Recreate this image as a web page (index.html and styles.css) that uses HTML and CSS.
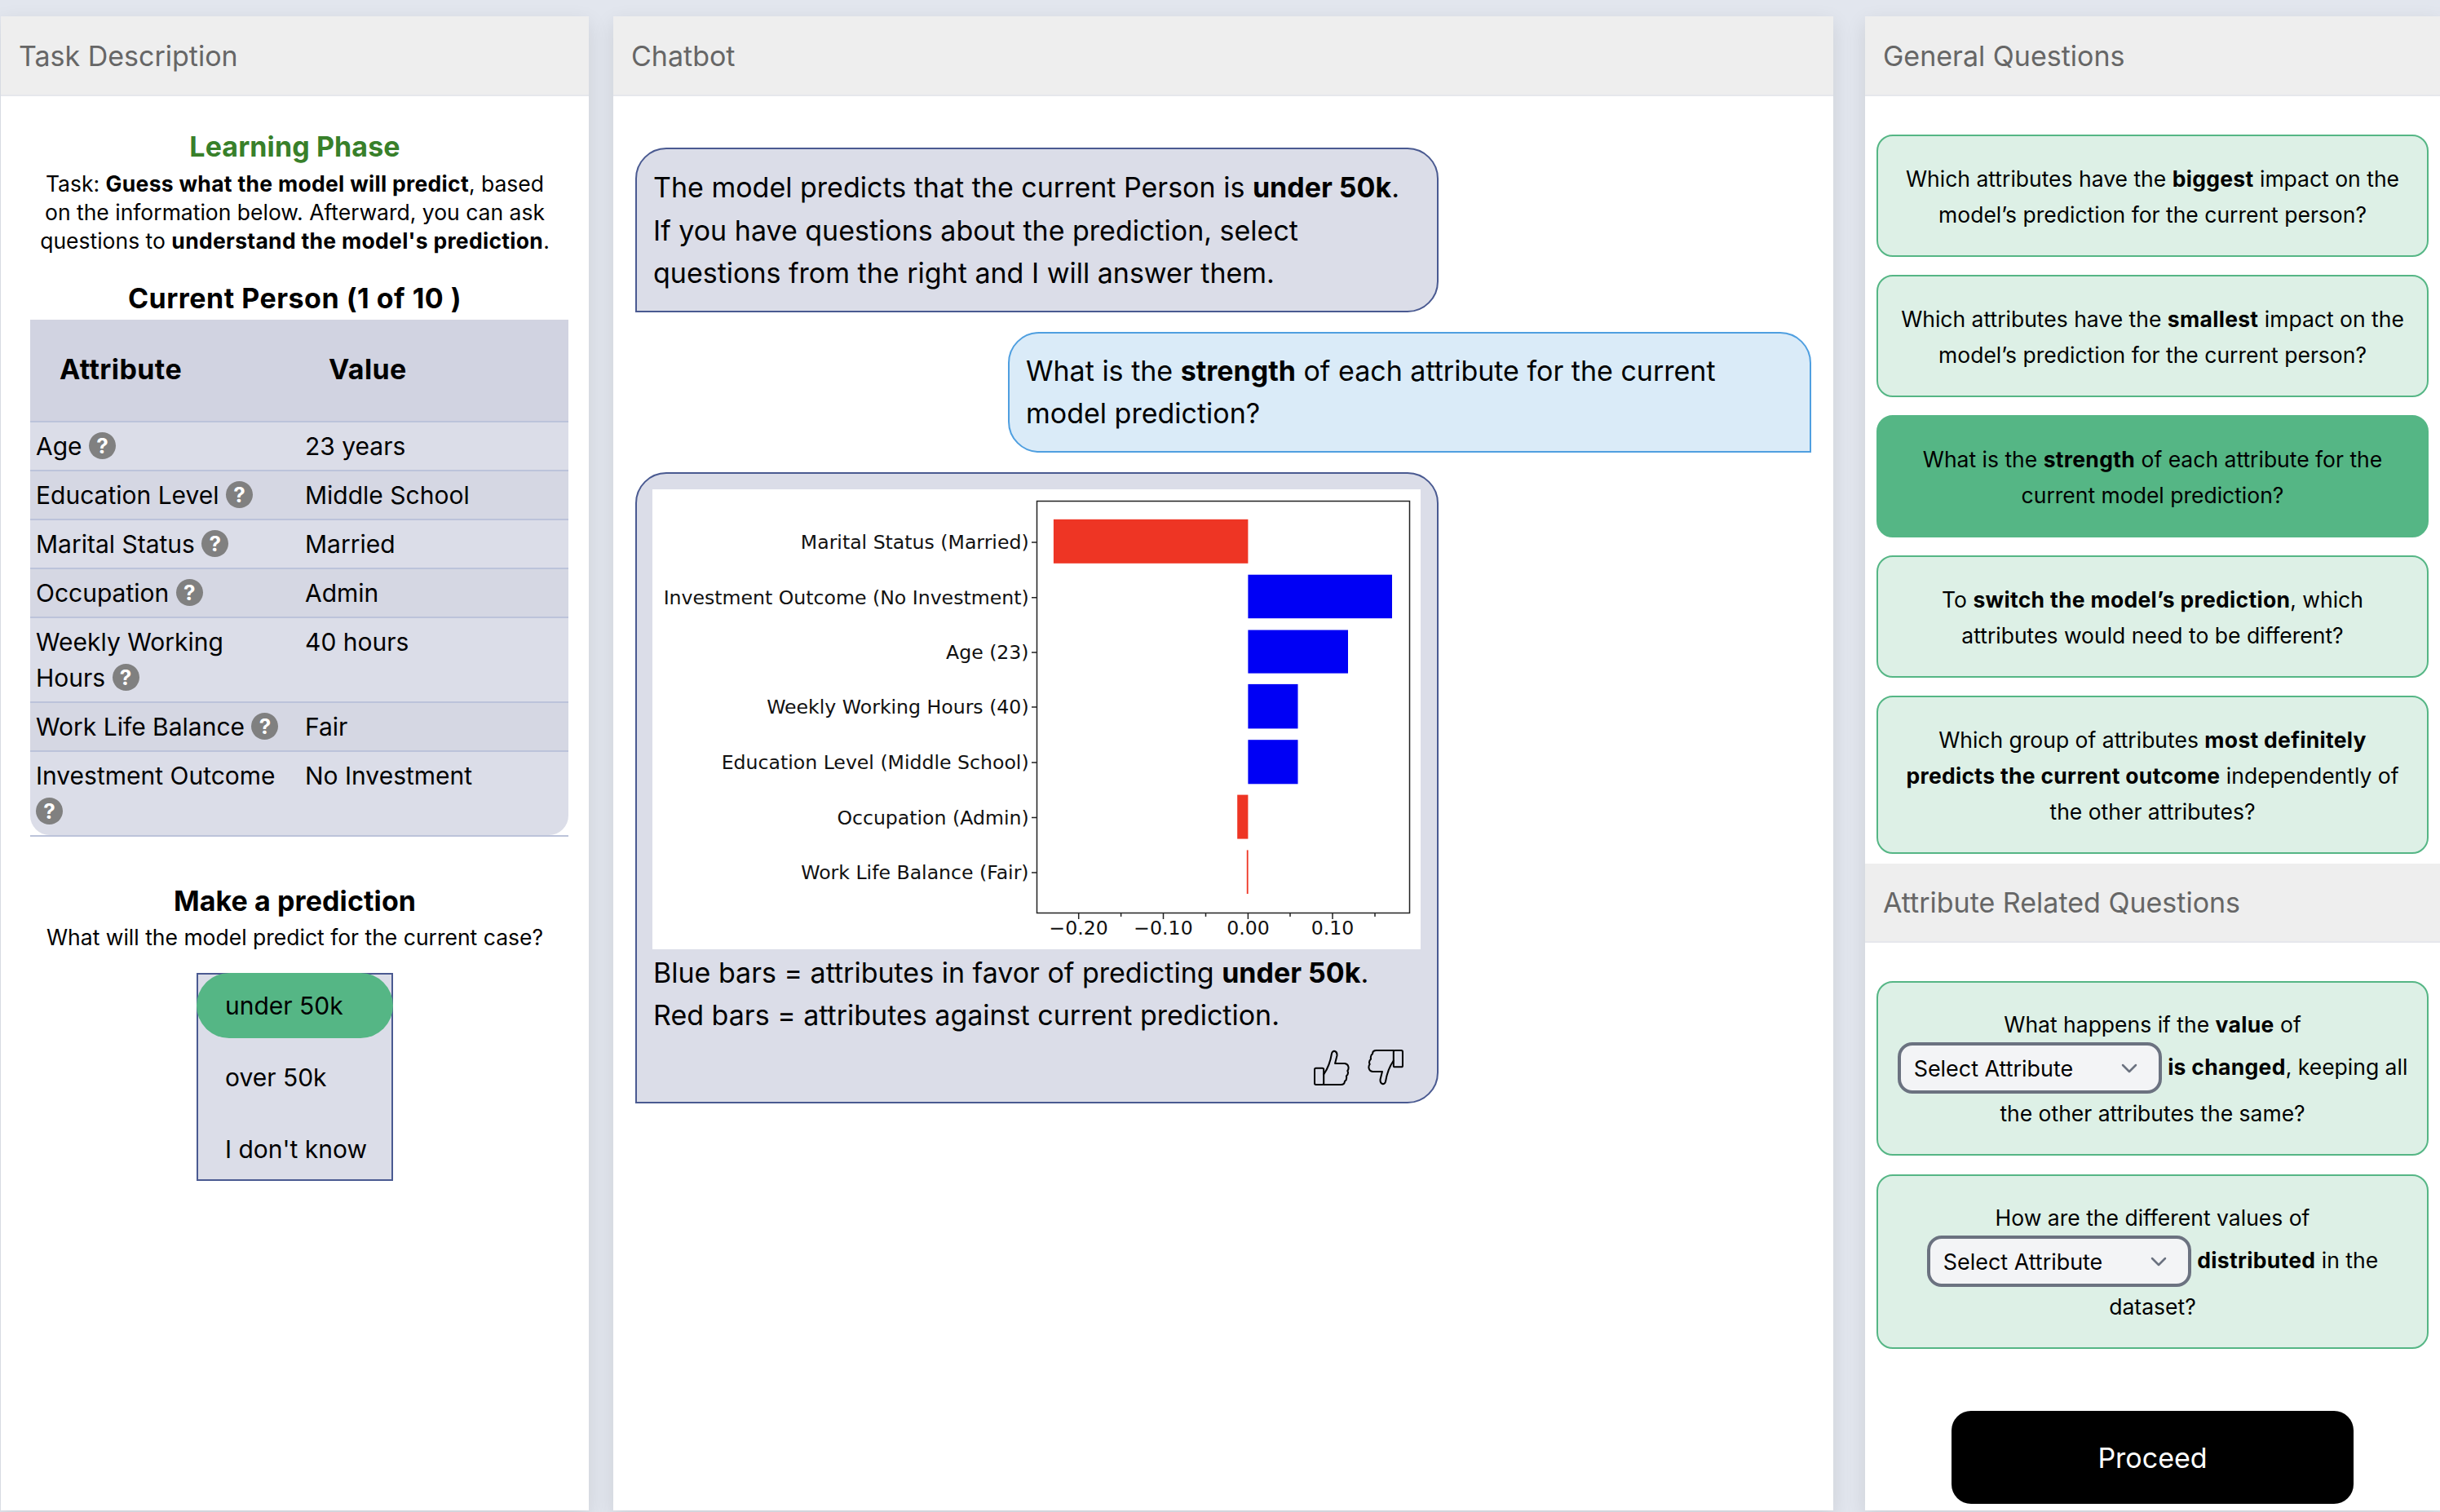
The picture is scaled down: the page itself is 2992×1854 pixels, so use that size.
FILE: index.html
```html
<!DOCTYPE html>
<html lang="en">
<head>
<meta charset="utf-8">
<title>Learning Phase</title>
<link rel="stylesheet" href="styles.css">
</head>
<body>
<main class="app">
  <section class="panel panel-task">
    <header class="panel-head">Task Description</header>
    <div class="task-body">
      <h2 class="phase">Learning Phase</h2>
      <p class="task-text">Task: <b>Guess what the model will predict</b>, based<br>on the information below. Afterward, you can ask<br>questions to <b>understand the model's prediction</b>.</p>
      <h3 class="person">Current Person (1 of 10 )</h3>
      <div class="table-wrap">
        <table class="attrs">
          <thead><tr><th class="th-attr">Attribute</th><th class="th-val">Value</th></tr></thead>
          <tbody>
            <tr><td>Age <span class="help">?</span></td><td>23 years</td></tr>
            <tr><td>Education Level <span class="help">?</span></td><td>Middle School</td></tr>
            <tr><td>Marital Status <span class="help">?</span></td><td>Married</td></tr>
            <tr><td>Occupation <span class="help">?</span></td><td>Admin</td></tr>
            <tr><td>Weekly Working<br>Hours <span class="help">?</span></td><td>40 hours</td></tr>
            <tr><td>Work Life Balance <span class="help">?</span></td><td>Fair</td></tr>
            <tr><td>Investment Outcome<br><span class="help">?</span></td><td>No Investment</td></tr>
          </tbody>
        </table>
      </div>
      <h3 class="predict-title">Make a prediction</h3>
      <p class="predict-sub">What will the model predict for the current case?</p>
      <div class="options">
        <div class="option option-on">under 50k</div>
        <div class="option">over 50k</div>
        <div class="option">I don't know</div>
      </div>
    </div>
  </section>

  <section class="panel panel-chat">
    <header class="panel-head">Chatbot</header>
    <div class="chat-body">
      <div class="bubble bot">The model predicts that the current Person is <b>under 50k</b>.<br>If you have questions about the prediction, select<br>questions from the right and I will answer them.</div>
      <div class="bubble user">What is the <b>strength</b> of each attribute for the current<br>model prediction?</div>
      <div class="bubble bot bot-chart">
        <svg class="chart" width="942" height="564" viewBox="0 0 942 564">
          <rect width="942" height="564" fill="#fff"/>
          <g fill="#ee3524">
            <rect x="491.9" y="36.8" width="238.5" height="54"/>
            <rect x="717.2" y="374.6" width="13.2" height="54"/>
            <rect x="728.8" y="442.4" width="1.8" height="53.6"/>
          </g>
          <g fill="#0000f5">
            <rect x="730.4" y="104.7" width="176.6" height="53.5"/>
            <rect x="730.4" y="172.5" width="122.6" height="53.1"/>
            <rect x="730.4" y="238.9" width="61.1" height="54.5"/>
            <rect x="730.4" y="307.2" width="61.1" height="54.1"/>
          </g>
          <rect x="471.5" y="14.5" width="457" height="505" fill="none" stroke="#222" stroke-width="1.5"/>
          <g stroke="#222" stroke-width="1.5">
            <path d="M465 65H471M465 132.700H471M465 200H471M465 267H471M465 335H471M465 402.600H471M465 470H471"/>
            <path d="M522.700 520V527M626.500 520V527M730.400 520V527M834 520V527"/>
            <path d="M574.600 520V524M678.500 520V524M782 520V524M886 520V524"/>
          </g>
          <g class="chart-labels" text-anchor="end">
            <text x="461.600" y="73">Marital Status (Married)</text>
            <text x="461.600" y="140.700">Investment Outcome (No Investment)</text>
            <text x="461.600" y="208">Age (23)</text>
            <text x="461.600" y="275">Weekly Working Hours (40)</text>
            <text x="461.600" y="343">Education Level (Middle School)</text>
            <text x="461.600" y="410.600">Occupation (Admin)</text>
            <text x="461.600" y="478">Work Life Balance (Fair)</text>
          </g>
          <g class="chart-labels" text-anchor="middle">
            <text x="522.700" y="546">−0.20</text>
            <text x="626.500" y="546">−0.10</text>
            <text x="730.400" y="546">0.00</text>
            <text x="834" y="546">0.10</text>
          </g>
        </svg>
        <p class="chart-note">Blue bars = attributes in favor of predicting <b>under 50k</b>.<br>Red bars = attributes against current prediction.</p>
        <div class="thumbs">
          <svg class="thumb" width="44" height="44" viewBox="0 0 130 130" fill="none" stroke="#000" stroke-width="6" stroke-linejoin="round" stroke-linecap="round"><rect x="3" y="67" width="33" height="60" rx="5"/><path d="M36 90C50 70 60 45 65 14C68 0 86 4 84 22L77 50H112C128 52 128 70 122 77C127 85 122 92 118 96C120 105 117 112 112 115C112 124 105 127 98 127H36"/></svg>
          <svg class="thumb" width="44" height="44" viewBox="0 0 130 130" fill="none" stroke="#000" stroke-width="6" stroke-linejoin="round" stroke-linecap="round"><g transform="rotate(180 65 65)"><rect x="3" y="67" width="33" height="60" rx="5"/><path d="M36 90C50 70 60 45 65 14C68 0 86 4 84 22L77 50H112C128 52 128 70 122 77C127 85 122 92 118 96C120 105 117 112 112 115C112 124 105 127 98 127H36"/></g></svg>
        </div>
      </div>
    </div>
  </section>

  <section class="panel panel-questions">
    <header class="panel-head">General Questions</header>
    <div class="q-list q-general">
      <div class="q">Which attributes have the <b>biggest</b> impact on the<br>model’s prediction for the current person?</div>
      <div class="q">Which attributes have the <b>smallest</b> impact on the<br>model’s prediction for the current person?</div>
      <div class="q q-on">What is the <b>strength</b> of each attribute for the<br>current model prediction?</div>
      <div class="q">To <b>switch the model’s prediction</b>, which<br>attributes would need to be different?</div>
      <div class="q">Which group of attributes <b>most definitely</b><br><b>predicts the current outcome</b> independently of<br>the other attributes?</div>
    </div>
    <header class="panel-head panel-head-sub">Attribute Related Questions</header>
    <div class="q-list q-attr">
      <div class="q q-select">What happens if the <b>value</b> of<br><span class="select-wrap"><select class="attr-select"><option>Select Attribute</option></select><svg class="chev" width="20" height="12" viewBox="0 0 20 12" fill="none" stroke="#6b7280" stroke-width="2.500" stroke-linecap="round" stroke-linejoin="round"><path d="M2 2l8 8 8-8"/></svg></span> <b>is changed</b>, keeping all<br>the other attributes the same?</div>
      <div class="q q-select">How are the different values of<br><span class="select-wrap"><select class="attr-select"><option>Select Attribute</option></select><svg class="chev" width="20" height="12" viewBox="0 0 20 12" fill="none" stroke="#6b7280" stroke-width="2.500" stroke-linecap="round" stroke-linejoin="round"><path d="M2 2l8 8 8-8"/></svg></span> <b>distributed</b> in the<br>dataset?</div>
    </div>
    <div class="proceed-row"><button class="proceed" type="button">Proceed</button></div>
  </section>
</main>
</body>
</html>
```

FILE: styles.css
```css
* { box-sizing: border-box; }
html, body { margin: 0; height: 1854px; overflow: hidden; }
body {
  background: #e2e6ee;
  color: #000;
  font-family: "Inter", "Liberation Sans", sans-serif;
}
p, h2, h3 { margin: 0; }

.app {
  display: grid;
  grid-template-columns: 721px 1496px 705px;
  padding: 20px 0 2px 1px;
  height: 1854px;
}
.panel {
  background: #fff;
  box-shadow: 0 8px 24px rgba(0, 0, 0, 0.1);
  height: 1832px;
}
.panel-chat { margin-left: 30px; width: 1496px; }
.panel-questions { margin-left: 69px; width: 705px; }

.panel-head {
  height: 98px;
  padding: 0 22px;
  display: flex;
  align-items: center;
  background: #eeeeee;
  border-bottom: 2px solid #e6e7ec;
  color: #666;
  font-size: 34px;
}
.panel-head-sub { height: 97px; }

/* Task panel */
.task-body { padding: 38px 0 0; text-align: center; }
.phase { font-size: 34px; line-height: 48px; font-weight: 700; color: #38802a; letter-spacing: 0.1px; }
.task-text { font-size: 26.500px; line-height: 35px; margin-top: 4px; }
.task-text b { letter-spacing: 0.3px; }
.person { font-size: 34px; line-height: 52px; font-weight: 700; margin-top: 27px; letter-spacing: 0.5px; }
.table-wrap { width: 660px; margin-left: 36px; border-bottom: 2px solid #bcc3da; }
.attrs { width: 660px; border-collapse: separate; border-spacing: 0; table-layout: fixed; text-align: left; font-size: 30px; line-height: 44px; }
.attrs th { height: 126px; background: #d1d3e1; border-bottom: 2px solid #bcc3da; font-size: 34px; font-weight: 700; padding: 0 0 2px; letter-spacing: 0.4px; vertical-align: middle; }
.th-attr { width: 330px; padding-left: 36px !important; }
.th-val { padding-left: 36px !important; }
.attrs td { padding: 7px 7px; vertical-align: top; background: #dbdde8; border-bottom: 2px solid #bcc3da; }
.attrs tr:nth-child(even) td { background: #d5d7e3; }
.attrs tr:last-child td { border-bottom: 0; padding-bottom: 7px; }
.attrs tr:last-child td:first-child { border-radius: 0 0 0 24px; }
.attrs tr:last-child td:last-child { border-radius: 0 0 24px 0; }
.help {
  display: inline-block;
  width: 33px;
  height: 33px;
  border-radius: 50%;
  background: #808080;
  color: #fff;
  font-size: 26px;
  font-weight: 700;
  line-height: 33px;
  text-align: center;
  vertical-align: 2px;
}
.predict-title { font-size: 34px; line-height: 44px; font-weight: 700; margin-top: 57px; letter-spacing: 0.1px; }
.predict-sub { font-size: 26.500px; line-height: 36px; margin-top: 4px; }
.options {
  width: 241px;
  height: 255px;
  margin: 26px auto 0;
  background: #dbdde8;
  border: 2px solid #4a5a91;
  display: flex;
  flex-direction: column;
  gap: 8px;
  text-align: left;
  font-size: 30px;
}
.option { flex: none; height: 80px; margin: 0 -2px; padding: 0 0 0 35px; display: flex; align-items: center; border-radius: 40px; }
.option:first-child { margin-top: -2px; }
.option-on { background: #55b685; }

/* Chat */
.chat-body { padding: 63px 27px 0; display: flex; flex-direction: column; gap: 24px; align-items: flex-start; }
.bubble {
  width: 985px;
  padding: 21px 20px 19px;
  font-size: 34px;
  line-height: 52.500px;
  border-style: solid;
  border-width: 2px;
}
.bot { background: #dbdde8; border-color: #4a5a91; border-radius: 38px 38px 38px 0; }
.user { background: #daebf8; border-color: #4f9fe0; border-radius: 38px 38px 0 38px; align-self: flex-end; padding: 20px 20px 19px; }
.bot-chart { padding: 19px 19px 14px; height: 774px; }
.chart { display: block; }
.chart-labels { font-family: "DejaVu Sans", sans-serif; font-size: 23.600px; fill: #111; }
.chart-note { margin-top: 3px; padding-left: 1px; line-height: 52px; }
.thumbs { display: flex; justify-content: flex-end; gap: 22px; margin-top: 16px; padding-right: 22px; }
.thumb { display: block; }

/* Questions */
.q-list { display: flex; flex-direction: column; padding: 0 14px; }
.q-general { padding-top: 47px; gap: 22px; padding-bottom: 12px; }
.q-attr { padding-top: 47px; gap: 23px; }
.q {
  padding: 30px 10px 28px;
  min-height: 150px;
  background: #ddf0e6;
  border: 2px solid #55b685;
  border-radius: 20px;
  text-align: center;
  font-size: 26.500px;
  line-height: 44px;
}
.q b { letter-spacing: 0.3px; }
.q-on { background: #55b685; }
.q-select { padding-top: 29px; min-height: 212px; }
.select-wrap { display: inline-block; position: relative; vertical-align: middle; margin-bottom: 2px; }
.attr-select {
  appearance: none;
  -webkit-appearance: none;
  display: block;
  width: 324px;
  height: 63px;
  padding: 0 60px 0 16px;
  background: #f3f4f6;
  border: 4px solid #6b7280;
  border-radius: 18px;
  color: #000;
  font: 26.900px "Inter", sans-serif;
}
.chev { position: absolute; right: 30px; top: 26px; }
.proceed-row { display: flex; justify-content: center; padding-top: 76px; }
.proceed {
  width: 493px;
  height: 114px;
  background: #000;
  color: #fff;
  border: 0;
  border-radius: 24px;
  font: 34px "Inter", sans-serif;
}
```
